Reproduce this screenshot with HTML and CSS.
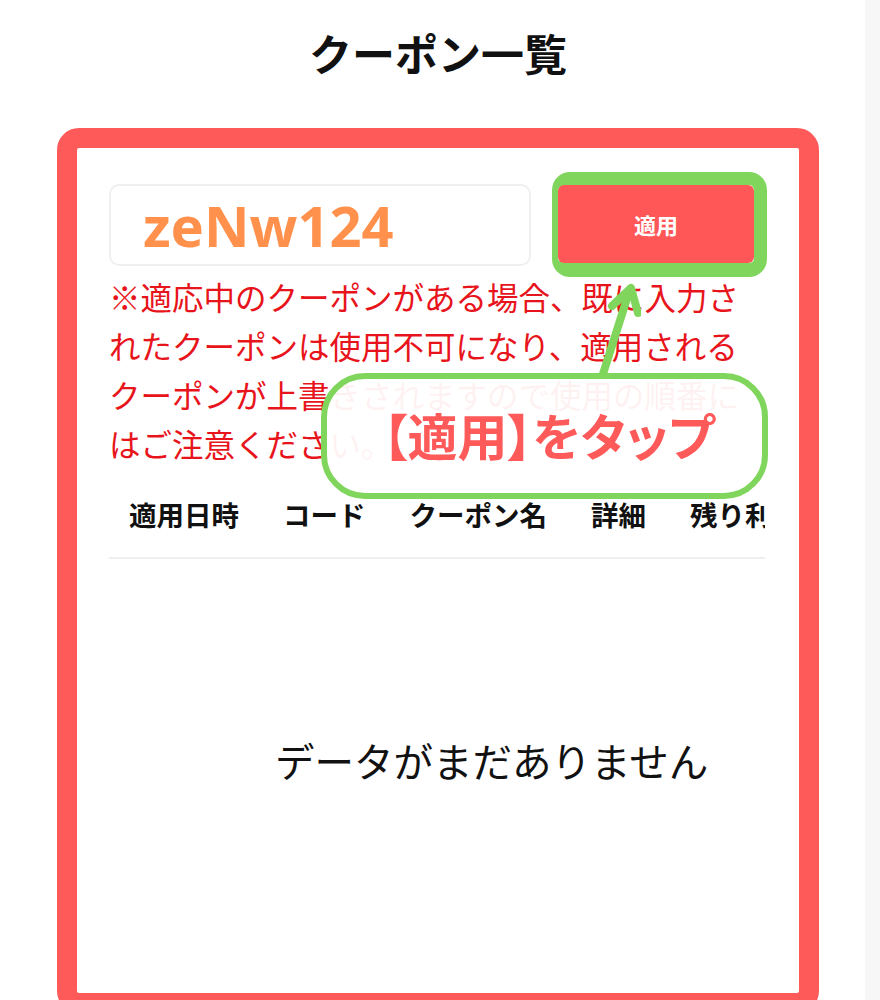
FILE: index.html
```html
<!DOCTYPE html>
<html lang="ja">
<head>
<meta charset="utf-8">
<title>クーポン一覧</title>
<link rel="stylesheet" href="styles.css">
</head>
<body>
<div class="page">
  <h1 class="title">クーポン一覧</h1>
  <section class="frame">
    <div class="coupon-row">
      <input class="code-input" type="text" value="zeNw124">
      <div class="highlight">
        <button class="apply-btn" type="button">適用</button>
      </div>
    </div>
    <p class="notice">※適応中のクーポンがある場合、既に入力されたクーポンは使用不可になり、適用されるクーポンが上書きされますので使用の順番にはご注意ください。</p>
    <div class="table-wrap">
      <div class="table-head">
        <span class="th first">適用日時</span>
        <span class="th">コード</span>
        <span class="th">クーポン名</span>
        <span class="th">詳細</span>
        <span class="th">残り利用回数</span>
      </div>
      <div class="empty">データがまだありません</div>
    </div>
  </section>

  <svg class="arrow" width="60" height="110" viewBox="0 0 60 110" aria-hidden="true">
    <path d="M22 103 L49 18" fill="none" stroke="#80d65c" stroke-width="8" stroke-linecap="round"/>
    <path d="M31 35 L50 17 L57 42" fill="none" stroke="#80d65c" stroke-width="8" stroke-linecap="round" stroke-linejoin="round"/>
  </svg>
  <div class="callout">【適用】をタップ</div>
</div>
</body>
</html>
```

FILE: styles.css
```css
html, body {
  margin: 0;
  padding: 0;
  overflow: hidden;
}
body {
  background: linear-gradient(to right, #ffffff 0, #ffffff 865px, #f7f7f7 865px);
  font-family: "Noto Sans CJK JP", "Noto Sans", sans-serif;
  color: #111;
}
.page {
  position: relative;
  width: 876px;
}
.title {
  margin: 0;
  font-size: 43px;
  line-height: 104px;
  font-weight: 700;
  text-align: center;
  color: #111;
}
.frame {
  box-sizing: border-box;
  margin: 24px 57px 0;
  height: 885px;
  border: 20px solid #ff5a5a;
  border-radius: 22px;
  padding: 24px 33px 0 32px;
  background: #fff;
}
.coupon-row {
  display: flex;
  align-items: center;
  gap: 21px;
  margin-right: -2px;
}
.code-input {
  box-sizing: border-box;
  width: 422px;
  height: 82px;
  border: 2px solid #f0f0f0;
  border-radius: 10px;
  padding: 0 0 0 32px;
  font-family: "Noto Sans", "Noto Sans CJK JP", sans-serif;
  font-size: 56px;
  font-weight: 700;
  color: #ff914d;
  background: #fff;
  outline: none;
}
.highlight {
  box-sizing: border-box;
  width: 215px;
  height: 105px;
  border-style: solid;
  border-color: #80d65c;
  border-width: 13px 13px 14px 6px;
  border-radius: 18px;
  display: flex;
}
.apply-btn {
  flex: 1;
  border: none;
  border-radius: 6px;
  background: #ff5757;
  color: #fff;
  font-family: "Noto Sans CJK JP", sans-serif;
  font-size: 22px;
  font-weight: 700;
  padding: 0;
}
.notice {
  margin: -5px 0 0;
  font-size: 31.5px;
  line-height: 49px;
  color: #e8141b;
}
.table-wrap {
  width: 656px;
  overflow: hidden;
}
.table-head {
  display: flex;
  white-space: nowrap;
  border-bottom: 2px solid #efefef;
}
.th {
  flex: none;
  padding: 32px 22px 29px;
  font-size: 27.5px;
  line-height: 28px;
  font-weight: 700;
  color: #111;
}
.th.first {
  padding-left: 20px;
}
.empty {
  padding: 173px 0 0 166px;
  font-size: 39.5px;
  line-height: 56px;
  color: #111;
  white-space: nowrap;
}
.arrow {
  position: absolute;
  left: 581px;
  top: 271px;
}
.callout {
  position: absolute;
  left: 321px;
  top: 373px;
  box-sizing: border-box;
  width: 447px;
  height: 126px;
  border: 6px solid #80d65c;
  border-radius: 44px;
  background: rgba(255, 255, 255, 0.94);
  display: flex;
  align-items: center;
  justify-content: center;
  font-size: 50px;
  font-weight: 700;
  font-feature-settings: "palt" 1;
  color: #ff5a5a;
  padding: 0 0 4px 8px;
}
```
